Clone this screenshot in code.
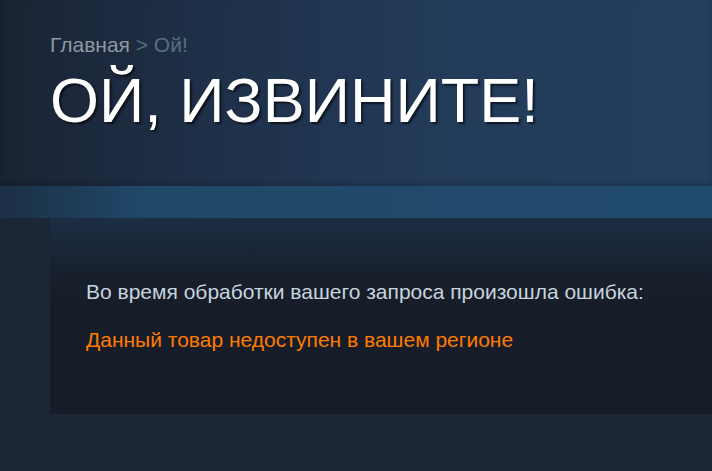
export default function App() {
  return (
    <div className="w-full h-[471px] overflow-hidden bg-[#1b2636] font-['Liberation_Sans',Arial,sans-serif]">
      {/* Page header */}
      <div className="h-[186px] px-[50px] pt-[34px] bg-[linear-gradient(90deg,#1a2333_0%,#1f3049_30%,#223b59_60%,#233f5e_100%)] shadow-[inset_0_-3px_4px_rgba(0,0,0,0.15)]">
        <div className="text-[21px] leading-[21px] whitespace-nowrap">
          <span className="text-[#8f98a0]">Главная</span>
          <span className="text-[#56707f]"> &gt; Ой!</span>
        </div>
        <h1 className="mt-[14px] text-[63px] leading-none font-normal text-white whitespace-nowrap [text-shadow:2px_2px_2px_rgba(0,0,0,0.6)]">
          ОЙ, ИЗВИНИТЕ!
        </h1>
      </div>

      {/* Blue band */}
      <div className="h-[32px] bg-[linear-gradient(90deg,#1c2f45_0%,#204869_20%,#214b6d_100%)]" />

      {/* Error box */}
      <div className="pl-[50px]">
        <div className="h-[196px] pl-[36px] pt-[62px] bg-[linear-gradient(180deg,#1c2e44_0%,#18202d_28%,#171d28_45%,#171d28_100%)]">
          <p className="text-[21px] leading-[24px] text-[#c6d4df] whitespace-nowrap">
            Во время обработки вашего запроса произошла ошибка:
          </p>
          <p className="mt-[24px] text-[21px] leading-[24px] text-[#ff7b00] whitespace-nowrap">
            Данный товар недоступен в вашем регионе
          </p>
        </div>
      </div>
    </div>
  );
}
